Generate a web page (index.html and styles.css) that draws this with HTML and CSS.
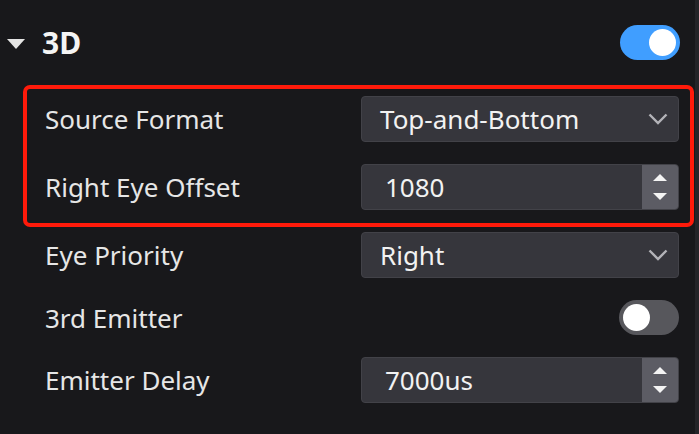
FILE: index.html
```html
<!DOCTYPE html>
<html>
<head>
<meta charset="utf-8">
<link rel="stylesheet" href="styles.css">
</head>
<body>
<div class="page">
  <div class="panel">
    <div class="header">
      <div class="title">
        <span class="caret"></span>
        <span class="title-text">3D</span>
      </div>
      <div class="switch on"><span class="knob"></span></div>
    </div>
    <div class="highlight">
      <div class="row">
        <span class="label">Source Format</span>
        <div class="select">
          <span class="value">Top-and-Bottom</span>
          <svg class="chev" width="20" height="14" viewBox="0 0 20 14"><path d="M1.5 2.5 L10 11 L18.5 2.5" fill="none" stroke="#b3b3b8" stroke-width="2.4"/></svg>
        </div>
      </div>
      <div class="row">
        <span class="label">Right Eye Offset</span>
        <div class="spinner">
          <span class="value num">1080</span>
          <div class="spin-btns">
            <span class="up"></span>
            <span class="down"></span>
          </div>
        </div>
      </div>
    </div>
    <div class="rows">
      <div class="row">
        <span class="label">Eye Priority</span>
        <div class="select">
          <span class="value">Right</span>
          <svg class="chev" width="20" height="14" viewBox="0 0 20 14"><path d="M1.5 2.5 L10 11 L18.5 2.5" fill="none" stroke="#b3b3b8" stroke-width="2.4"/></svg>
        </div>
      </div>
      <div class="row short">
        <span class="label">3rd Emitter</span>
        <div class="switch off"><span class="knob"></span></div>
      </div>
      <div class="row">
        <span class="label">Emitter Delay</span>
        <div class="spinner">
          <span class="value num">7000us</span>
          <div class="spin-btns">
            <span class="up"></span>
            <span class="down"></span>
          </div>
        </div>
      </div>
    </div>
  </div>
  <div class="scrollbar"></div>
</div>
</body>
</html>
```

FILE: styles.css
```css
html, body {
  margin: 0;
  padding: 0;
  background: #18181b;
}
body {
  font-family: "Noto Sans", "Open Sans", sans-serif;
  color: #e8e8e8;
}
.page {
  display: flex;
  width: 699px;
  height: 434px;
  overflow: hidden;
}
.panel {
  flex: 1;
  display: flex;
  flex-direction: column;
}
.scrollbar {
  width: 4px;
  background: #242428;
}
.header {
  height: 85px;
  display: flex;
  align-items: center;
  justify-content: space-between;
  padding: 0 15px 0 7px;
  box-sizing: border-box;
}
.title {
  display: flex;
  align-items: center;
}
.caret {
  width: 0;
  height: 0;
  border-left: 9px solid transparent;
  border-right: 9px solid transparent;
  border-top: 10px solid #e4e4e4;
  margin-right: 17px;
  margin-top: 2px;
}
.title-text {
  font-size: 30px;
  font-weight: bold;
  color: #f4f4f4;
  line-height: 1;
}
.switch {
  width: 60px;
  height: 35px;
  border-radius: 18px;
  display: flex;
  align-items: center;
  padding: 0 4px;
  box-sizing: border-box;
}
.switch.on {
  background: #409eff;
  justify-content: flex-end;
}
.switch.off {
  background: #57575c;
  justify-content: flex-start;
}
.knob {
  width: 27px;
  height: 27px;
  border-radius: 50%;
  background: #ffffff;
}
.highlight {
  margin: 0 1px 0 23px;
  border: 4px solid #ff1a0a;
  border-radius: 7px;
  padding: 7px 11px 13px 18px;
  display: flex;
  flex-direction: column;
  gap: 22px;
}
.rows {
  display: flex;
  flex-direction: column;
  gap: 22px;
  padding: 5px 16px 0 45px;
}
.row {
  display: flex;
  align-items: center;
  justify-content: space-between;
  height: 46px;
}
.row.short {
  height: 35px;
}
.label {
  font-size: 26px;
  color: #e6e6e6;
}
.select, .spinner {
  width: 318px;
  height: 46px;
  box-sizing: border-box;
  background: #36363c;
  border: 1px solid #424248;
  border-radius: 4px;
  display: flex;
  align-items: center;
}
.select {
  padding: 0 10px 0 18px;
  justify-content: space-between;
}
.spinner {
  padding-left: 23px;
  justify-content: space-between;
  overflow: hidden;
}
.value {
  font-size: 26px;
  color: #f2f2f2;
}
.chev {
  display: block;
}
.spin-btns {
  width: 36px;
  height: 100%;
  background: #5c5c64;
  display: flex;
  flex-direction: column;
  align-items: center;
  justify-content: center;
  gap: 12px;
}
.up, .down {
  width: 0;
  height: 0;
  border-left: 7px solid transparent;
  border-right: 7px solid transparent;
}
.up {
  border-bottom: 7px solid #f4f4f4;
}
.down {
  border-top: 7px solid #f4f4f4;
}
```
